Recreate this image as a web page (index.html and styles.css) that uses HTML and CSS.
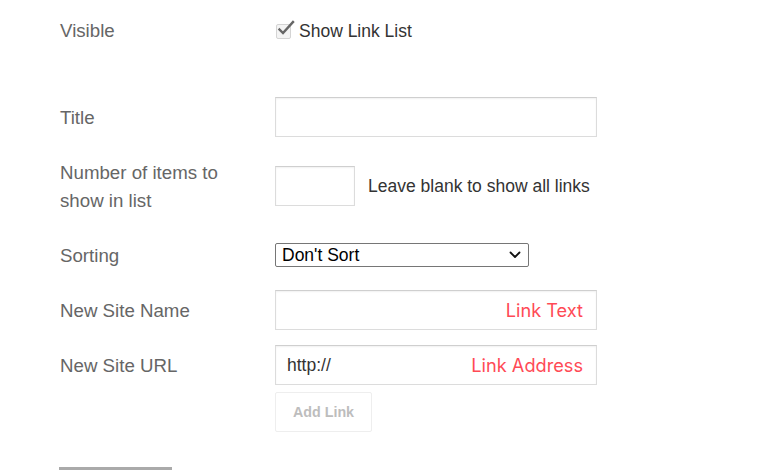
FILE: index.html
```html
<!DOCTYPE html>
<html>
<head>
<meta charset="utf-8">
<link rel="stylesheet" href="styles.css">
</head>
<body>
<form class="form">
  <div class="row row-visible">
    <div class="label">Visible</div>
    <label class="check">
      <span class="box">
        <svg width="20" height="18" viewBox="0 0 20 18"><path d="M3.5 9.5 L7 13 L17 2" fill="none" stroke="#666" stroke-width="2.4" stroke-linecap="square"/></svg>
      </span>
      <span class="check-text">Show Link List</span>
    </label>
  </div>
  <div class="row row-title">
    <div class="label">Title</div>
    <div class="field"><input class="input wide" type="text"></div>
  </div>
  <div class="row row-count">
    <div class="label">Number of items to<br>show in list</div>
    <div class="field">
      <input class="input small" type="text">
      <span class="hint">Leave blank to show all links</span>
    </div>
  </div>
  <div class="row row-sort">
    <div class="label">Sorting</div>
    <div class="field">
      <div class="select-wrap">
        <select class="select"><option>Don't Sort</option></select>
        <svg class="chev" width="12" height="8" viewBox="0 0 12 8"><path d="M1.5 1.5 L6 6 L10.5 1.5" fill="none" stroke="#111" stroke-width="1.8" stroke-linecap="round" stroke-linejoin="round"/></svg>
      </div>
    </div>
  </div>
  <div class="row row-name">
    <div class="label">New Site Name</div>
    <div class="field">
      <div class="tagged">
        <input class="input wide" type="text">
        <span class="tag">Link Text</span>
      </div>
    </div>
  </div>
  <div class="row row-url">
    <div class="label">New Site URL</div>
    <div class="field">
      <div class="tagged">
        <input class="input wide" type="text" value="http://">
        <span class="tag">Link Address</span>
      </div>
    </div>
  </div>
  <div class="row row-add">
    <div class="label"></div>
    <div class="field"><button type="button" class="btn" disabled>Add Link</button></div>
  </div>
  <div class="bar"></div>
</form>
</body>
</html>
```

FILE: styles.css
```css
html, body {
  margin: 0;
  padding: 0;
  background: #fff;
}
body {
  font-family: "Liberation Sans", Arial, sans-serif;
  font-size: 17.5px;
  color: #333;
  overflow: hidden;
}
.form {
  padding: 10px 0 0 60px;
}
.row {
  display: flex;
  align-items: center;
  min-height: 40px;
}
.label {
  width: 215px;
  flex: none;
  color: #666;
  font-size: 18.7px;
  line-height: 28px;
  padding-top: 2px;
}
.field {
  display: flex;
  align-items: center;
}
.row-title { margin-top: 47px; }
.row-count { margin-top: 20px; }
.row-sort { margin-top: 20px; }
.row-name { margin-top: 15px; }
.row-url { margin-top: 15px; }
.row-add { margin-top: 7px; }

.check {
  display: flex;
  align-items: center;
  margin-top: 2px;
}
.box {
  position: relative;
  width: 13px;
  height: 13px;
  border: 1px solid #d4d4d4;
  border-radius: 2px;
  background: #f4f4f4;
  margin-left: 1px;
  margin-right: 8px;
}
.box svg {
  position: absolute;
  left: -1px;
  top: -5px;
}
.check-text { color: #333; }

.input {
  box-sizing: border-box;
  height: 40px;
  border: 1px solid #dcdcdc;
  border-top-color: #cfcfcf;
  box-shadow: inset 0 1px 2px rgba(0,0,0,0.06);
  background: #fff;
  font-family: "Liberation Sans", Arial, sans-serif;
  font-size: 17.5px;
  color: #333;
  padding: 0 11px;
  margin: 0;
  outline: none;
}
.wide { width: 322px; }
.small { width: 80px; }
.hint {
  margin-left: 13px;
  color: #333;
}
.select-wrap {
  position: relative;
  display: flex;
}
.select {
  -webkit-appearance: none;
  appearance: none;
  box-sizing: border-box;
  width: 254px;
  height: 24px;
  padding: 0 0 0 6px;
  font-family: "Liberation Sans", Arial, sans-serif;
  font-size: 17.5px;
  color: #000;
  background: #fff;
  border: 1px solid #767676;
  border-radius: 2px;
  margin: 0;
}
.chev {
  position: absolute;
  right: 8px;
  top: 8px;
  pointer-events: none;
}
.tagged {
  position: relative;
}
.tag {
  position: absolute;
  right: 14px;
  top: 50%;
  transform: translateY(-50%);
  font-family: Inter, "Noto Sans", sans-serif;
  font-size: 18.2px;
  color: #ff4a55;
  pointer-events: none;
}
.btn {
  box-sizing: border-box;
  width: 97px;
  height: 40px;
  border: 1px solid #eeeeee;
  border-radius: 2px;
  background: #fff;
  color: #bdbdbd;
  font-family: "Liberation Sans", Arial, sans-serif;
  font-weight: bold;
  font-size: 14.3px;
  padding: 0;
}
.bar {
  margin-top: 35px;
  width: 113px;
  height: 4px;
  background: #aaa;
  margin-left: -1px;
}
```
